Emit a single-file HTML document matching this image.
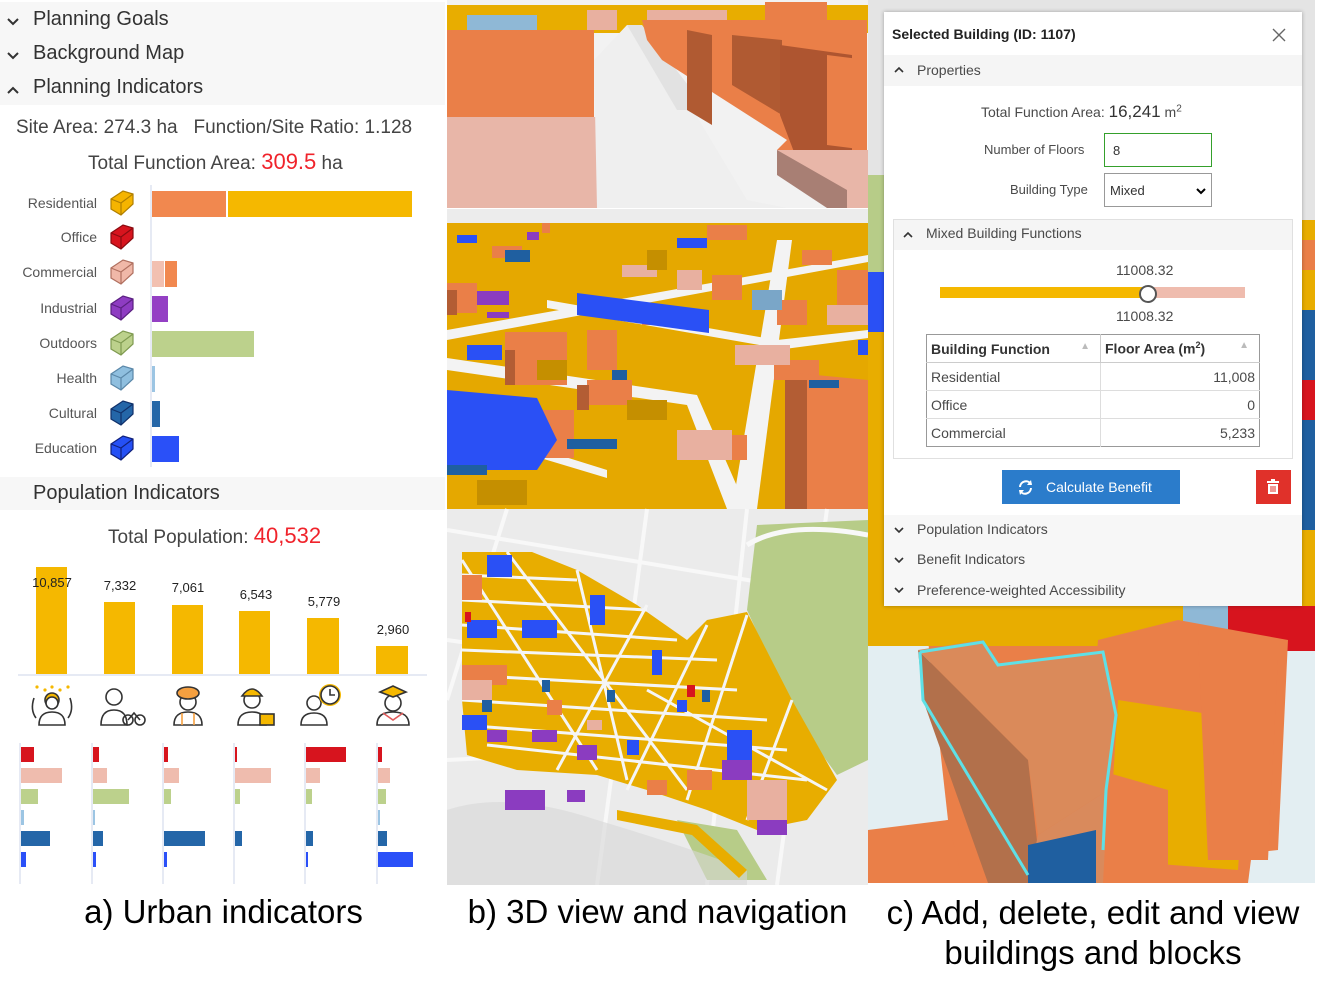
<!DOCTYPE html>
<html><head><meta charset="utf-8">
<style>
*{margin:0;padding:0;box-sizing:border-box}
body{width:1323px;height:993px;background:#fff;position:relative;overflow:hidden;font-family:"Liberation Sans",sans-serif;color:#323232}
.a{position:absolute}
.hdr{position:absolute;left:0;width:445px;background:#f7f7f7;font-size:20px;color:#323232}
.row{position:absolute;left:33px;white-space:nowrap}
.lbl{position:absolute;left:0;width:97px;font-size:14px;color:#555;text-align:right;white-space:nowrap}
.cap{position:absolute;font-size:33px;color:#000;white-space:nowrap;text-align:center}
.dlg{position:absolute;left:884px;top:12px;width:418px;height:594px;background:#fff;box-shadow:0 0 4px rgba(0,0,0,.3);font-size:14px;color:#4a4a4a}
table{border-collapse:collapse}
</style></head><body>

<!-- ===== Panel a ===== -->
<div class="hdr" style="top:2px;height:103px"></div>
<svg class="a" style="left:0;top:0" width="30" height="510">
 <g fill="none" stroke="#333" stroke-width="2">
  <path d="M8 19 L13 24 L18 19"/><path d="M8 53 L13 58 L18 53"/><path d="M8 93 L13 88 L18 93"/><path d="M8 499 L13 494 L18 499"/>
 </g>
</svg>
<div class="row" style="top:8px;font-size:20px">Planning Goals</div>
<div class="row" style="top:42px;font-size:20px">Background Map</div>
<div class="row" style="top:76px;font-size:20px">Planning Indicators</div>
<div class="a" style="left:16px;top:117px;font-size:19px;color:#444;white-space:nowrap">Site Area: 274.3 ha&nbsp;&nbsp;&nbsp;Function/Site Ratio: 1.128</div>
<div class="a" style="left:88px;top:149px;font-size:19px;color:#444;white-space:nowrap">Total Function Area: <span style="color:#f0232b;font-size:22px">309.5</span> ha</div>

<div class="lbl" style="top:195px">Residential</div>
<div class="lbl" style="top:229px">Office</div>
<div class="lbl" style="top:264px">Commercial</div>
<div class="lbl" style="top:300px">Industrial</div>
<div class="lbl" style="top:335px">Outdoors</div>
<div class="lbl" style="top:370px">Health</div>
<div class="lbl" style="top:405px">Cultural</div>
<div class="lbl" style="top:440px">Education</div>

<svg class="a" style="left:0;top:180px" width="445" height="290">
 <defs><g id="cube"><path d="M1 9 L13 1 L23 4 L23 14 L11 25 L1 19 Z"/><path d="M1 9 L11 13 L23 4 M11 13 L11 25" fill="none"/></g></defs>
 <g stroke-width="1.2">
  <use href="#cube" x="110" y="10" fill="#f5b400" stroke="#b07f00"/>
  <use href="#cube" x="110" y="44" fill="#d7141e" stroke="#8a0b10"/>
  <use href="#cube" x="110" y="79" fill="#f0b8a8" stroke="#b07060"/>
  <use href="#cube" x="110" y="115" fill="#8e3cc2" stroke="#5a2080"/>
  <use href="#cube" x="110" y="150" fill="#bcd18c" stroke="#7f9a50"/>
  <use href="#cube" x="110" y="185" fill="#8fbfdf" stroke="#5a87a8"/>
  <use href="#cube" x="110" y="220" fill="#2466a8" stroke="#10306a"/>
  <use href="#cube" x="110" y="255" fill="#2550f5" stroke="#10207a"/>
 </g>
 <line x1="151" y1="5" x2="151" y2="287" stroke="#dde3f0" stroke-width="1.5"/>
 <rect x="152" y="11" width="74" height="26" fill="#f1884f"/>
 <rect x="228" y="11" width="184" height="26" fill="#f5b800"/>
 <rect x="152" y="81" width="12" height="26" fill="#f2c0b1"/>
 <rect x="165" y="81" width="12" height="26" fill="#f1884f"/>
 <rect x="152" y="116" width="16" height="26" fill="#9440c4"/>
 <rect x="152" y="151" width="102" height="26" fill="#bcd18c"/>
 <rect x="152" y="186" width="3" height="26" fill="#9cc5e3"/>
 <rect x="152" y="221" width="8" height="26" fill="#2466a8"/>
 <rect x="152" y="256" width="27" height="26" fill="#2a50f8"/>
</svg>

<div class="hdr" style="top:477px;height:33px"></div>
<div class="row" style="top:482px;font-size:20px">Population Indicators</div>
<div class="a" style="left:108px;top:523px;font-size:19px;color:#444;white-space:nowrap">Total Population: <span style="color:#f0232b;font-size:22px">40,532</span></div>

<svg class="a" style="left:0;top:560px" width="445" height="330">
 <g fill="#f5b800">
  <rect x="36" y="7" width="31" height="107"/>
  <rect x="104" y="42" width="31" height="72"/>
  <rect x="172" y="45" width="31" height="69"/>
  <rect x="239" y="51" width="31" height="63"/>
  <rect x="307" y="58" width="32" height="56"/>
  <rect x="376" y="86" width="32" height="28"/>
 </g>
 <line x1="18" y1="115" x2="427" y2="115" stroke="#dde3f0" stroke-width="1.5"/>
 <g font-size="13" fill="#222" text-anchor="middle" font-family="Liberation Sans">
  <text x="52" y="27">10,857</text><text x="120" y="30">7,332</text><text x="188" y="32">7,061</text>
  <text x="256" y="39">6,543</text><text x="324" y="46">5,779</text><text x="393" y="74">2,960</text>
 </g>
 <g stroke="#333" stroke-width="1.6" fill="#fff">
  <g transform="translate(52,0)"><circle cx="0" cy="140" r="7" fill="#f5b800"/><path d="M-13 165 Q-13 152 0 152 Q13 152 13 165 Z"/><circle cx="0" cy="143" r="6"/><path d="M-18 138 Q-22 150 -16 158 M18 138 Q22 150 16 158" fill="none"/></g>
  <g fill="#f5b800" stroke="none"><circle cx="37" cy="127" r="1.6"/><circle cx="45" cy="130" r="1.6"/><circle cx="52" cy="127" r="1.6"/><circle cx="60" cy="130" r="1.6"/><circle cx="68" cy="127" r="1.6"/></g>
  <g transform="translate(114,0)"><circle cx="0" cy="137" r="8"/><path d="M-13 165 Q-13 150 0 150 Q13 150 13 165 Z"/><circle cx="14" cy="160" r="5" fill="none"/><circle cx="26" cy="160" r="5" fill="none"/><path d="M14 160 L20 153 L26 160" fill="none"/></g>
  <g transform="translate(188,0)"><circle cx="0" cy="142" r="8"/><ellipse cx="0" cy="133" rx="11" ry="6" fill="#f5a040"/><path d="M-14 165 Q-14 152 0 152 Q14 152 14 165 Z"/><path d="M-6 153 L-6 165 M6 153 L6 165" stroke="#f5a040"/></g>
  <g transform="translate(252,0)"><circle cx="0" cy="140" r="8"/><path d="M-10 136 Q0 122 10 136 Z" fill="#f5b800"/><path d="M-14 165 Q-14 152 0 152 Q14 152 14 165 Z"/><rect x="8" y="154" width="14" height="11" fill="#f5b800"/></g>
  <g transform="translate(318,0)"><circle cx="-4" cy="143" r="7"/><path d="M-17 165 Q-17 153 -4 153 Q9 153 9 165 Z"/><circle cx="12" cy="135" r="11" fill="#f5b800" stroke="none"/><circle cx="12" cy="135" r="9"/><path d="M12 129 L12 135 L17 135" fill="none"/></g>
  <g transform="translate(393,0)"><circle cx="0" cy="143" r="8"/><path d="M-13 132 L0 126 L13 132 L0 137 Z" fill="#f5b800"/><path d="M-16 165 Q-16 152 0 152 Q16 152 16 165 Z"/><path d="M-10 153 L0 160 L10 153" stroke="#e05a5a" fill="none"/></g>
 </g>
 <g>
  <g stroke="#dde3f0" stroke-width="1.5"><line x1="20" y1="183" x2="20" y2="324"/><line x1="92" y1="183" x2="92" y2="324"/><line x1="163" y1="183" x2="163" y2="324"/><line x1="234" y1="183" x2="234" y2="324"/><line x1="305" y1="183" x2="305" y2="324"/><line x1="377" y1="183" x2="377" y2="324"/></g>
  <g fill="#d7141e"><rect x="21" y="187" width="13" height="15"/><rect x="93" y="187" width="6" height="15"/><rect x="164" y="187" width="4" height="15"/><rect x="235" y="187" width="2" height="15"/><rect x="306" y="187" width="40" height="15"/><rect x="378" y="187" width="4" height="15"/></g>
  <g fill="#efbcae"><rect x="21" y="208" width="41" height="15"/><rect x="93" y="208" width="14" height="15"/><rect x="164" y="208" width="15" height="15"/><rect x="235" y="208" width="36" height="15"/><rect x="306" y="208" width="14" height="15"/><rect x="378" y="208" width="12" height="15"/></g>
  <g fill="#bcd18c"><rect x="21" y="229" width="17" height="15"/><rect x="93" y="229" width="36" height="15"/><rect x="164" y="229" width="7" height="15"/><rect x="235" y="229" width="5" height="15"/><rect x="306" y="229" width="6" height="15"/><rect x="378" y="229" width="8" height="15"/></g>
  <g fill="#9cc5e3"><rect x="21" y="250" width="3" height="15"/><rect x="93" y="250" width="2" height="15"/><rect x="378" y="250" width="2" height="15"/></g>
  <g fill="#2466a8"><rect x="21" y="271" width="29" height="15"/><rect x="93" y="271" width="10" height="15"/><rect x="164" y="271" width="41" height="15"/><rect x="235" y="271" width="7" height="15"/><rect x="306" y="271" width="7" height="15"/><rect x="378" y="271" width="9" height="15"/></g>
  <g fill="#2a50f8"><rect x="21" y="292" width="5" height="15"/><rect x="93" y="292" width="3" height="15"/><rect x="164" y="292" width="3" height="15"/><rect x="306" y="292" width="2" height="15"/><rect x="378" y="292" width="35" height="15"/></g>
 </g>
</svg>

<!-- ===== Panel b ===== -->
<svg class="a" style="left:447px;top:0" width="421" height="885">
 <rect x="0" y="0" width="421" height="208" fill="#f2f2f2"/>
 <rect x="0" y="5" width="421" height="28" fill="#e8ad00"/>
 <rect x="20" y="15" width="70" height="20" fill="#8fb8d6"/>
 <rect x="140" y="10" width="30" height="20" fill="#e8b0a0"/>
 <rect x="200" y="10" width="80" height="20" fill="#e8b0a0"/>
 <rect x="0" y="30" width="147" height="88" fill="#ea7f48"/>
 <rect x="0" y="117" width="150" height="91" fill="#e8b6a8"/>
 <polygon points="147,60 180,25 195,25 300,200 340,208 150,208" fill="#efefef"/>
 <polygon points="180,25 195,25 260,110 230,110" fill="#e2e2e2"/>
 <polygon points="195,20 420,20 420,150 330,150 340,140 215,60 200,40" fill="#ea7f48"/>
 <polygon points="318,2 380,2 380,35 318,35" fill="#ea7f48"/>
 <polygon points="240,30 265,35 265,125 240,110" fill="#b05a32"/>
 <polygon points="285,35 335,40 335,115 285,85" fill="#b05a32"/>
 <polygon points="333,45 405,55 405,170 350,160 333,115" fill="#ae5530"/>
 <polygon points="380,55 420,60 420,150 380,145" fill="#ea7f48"/>
 <polygon points="330,150 421,150 421,208 400,208 330,168" fill="#e8b6a8"/>
 <polygon points="330,150 400,190 400,208 380,208 330,175" fill="#a87f74"/>
 <rect x="0" y="209" width="421" height="300" fill="#e5a800"/>
 <rect x="0" y="209" width="421" height="14" fill="#ececec"/>
 <g fill="#f3f3f3">
  <polygon points="330,240 345,240 310,509 285,509"/>
  <polygon points="0,330 421,255 421,262 0,340"/>
  <polygon points="0,358 250,395 300,509 280,509 240,405 0,370"/>
  <polygon points="100,300 330,340 330,348 100,308"/>
  <polygon points="0,420 160,470 160,478 0,430"/>
  <polygon points="330,340 421,330 421,338 330,350"/>
 </g>
 <g fill="#ea7f48">
  <rect x="95" y="223" width="8" height="10"/><rect x="260" y="225" width="40" height="15"/>
  <rect x="0" y="283" width="30" height="30"/><rect x="45" y="246" width="30" height="12"/>
  <rect x="58" y="332" width="62" height="53"/><rect x="65" y="410" width="62" height="48"/>
  <rect x="140" y="330" width="30" height="40"/><rect x="195" y="305" width="20" height="20"/>
  <rect x="265" y="275" width="30" height="25"/><rect x="330" y="300" width="30" height="25"/>
  <rect x="327" y="360" width="45" height="20"/><rect x="140" y="380" width="45" height="25"/>
  <rect x="280" y="435" width="20" height="25"/>
  <rect x="355" y="250" width="30" height="15"/><rect x="390" y="270" width="31" height="40"/>
 </g>
 <g fill="#b35d34"><rect x="58" y="350" width="10" height="35"/><rect x="130" y="385" width="12" height="25"/><rect x="0" y="290" width="10" height="25"/></g>
 <polygon points="338,372 421,380 421,509 338,509" fill="#ea7f48"/>
 <polygon points="338,380 360,380 360,509 338,509" fill="#b35d34"/>
 <g fill="#2a50f5">
  <polygon points="130,293 262,310 262,333 130,315"/><polygon points="0,390 90,398 110,440 90,470 0,470"/>
  <rect x="10" y="235" width="20" height="8"/><rect x="230" y="238" width="30" height="10"/><rect x="411" y="340" width="10" height="15"/>
  <rect x="20" y="345" width="35" height="15"/>
 </g>
 <g fill="#1f5fa0"><rect x="58" y="250" width="25" height="12"/><rect x="120" y="439" width="50" height="10"/><rect x="165" y="370" width="15" height="10"/><rect x="0" y="465" width="40" height="10"/><rect x="362" y="380" width="30" height="8"/></g>
 <g fill="#e8b0a0"><rect x="175" y="265" width="35" height="12"/><rect x="230" y="270" width="25" height="20"/><rect x="288" y="345" width="55" height="20"/><rect x="230" y="430" width="55" height="30"/><rect x="380" y="305" width="41" height="20"/></g>
 <g fill="#8b3cc0"><rect x="30" y="291" width="32" height="14"/><rect x="40" y="312" width="22" height="6"/><rect x="80" y="232" width="12" height="8"/></g>
 <rect x="305" y="290" width="30" height="20" fill="#7aa6c8"/>
 <g fill="#c58f00"><rect x="90" y="360" width="30" height="20"/><rect x="180" y="400" width="40" height="20"/><rect x="30" y="480" width="50" height="25"/><rect x="200" y="250" width="20" height="20"/></g>
 <rect x="0" y="509" width="421" height="376" fill="#ebebeb"/>
 <g stroke="#f8f8f8" stroke-width="4" fill="none">
  <path d="M0 530 L421 600 M60 509 L0 700 M200 509 L150 885 M300 509 L260 885 M0 760 L421 740 M380 509 L330 885 M0 640 L421 700"/>
 </g>
 <polygon points="310,525 421,520 421,760 390,775 350,720 300,610" fill="#b7cc88"/>
 <path d="M300 545 Q340 520 421 535" stroke="#f8f8f8" stroke-width="5" fill="none"/>
 <polygon points="230,820 290,830 320,880 260,880" fill="#b7cc88"/>
 <path d="M0 810 Q60 790 150 820 Q250 850 300 870 L300 885 L0 885" fill="#d7d7d7" opacity=".6"/>
 <polygon points="15,552 85,552 130,570 190,605 240,640 260,620 300,612 345,700 390,780 360,820 310,830 260,810 200,790 150,775 70,770 20,755 15,700" fill="#e8ad00"/>
 <g stroke="#f5f5f5" stroke-width="3" fill="none">
  <path d="M15 575 L130 580 M15 600 L200 610 M15 625 L230 640 M15 650 L270 660 M15 675 L290 690 M15 700 L320 720 M15 725 L340 750 M40 745 L360 780 M15 560 L150 770 M60 552 L240 790 M130 570 L180 780 M200 605 L110 770 M260 625 L180 790 M300 615 L240 800 M345 700 L300 820 M200 690 L380 790"/>
 </g>
 <g fill="#2a50f5"><rect x="40" y="555" width="25" height="22"/><rect x="20" y="620" width="30" height="18"/><rect x="75" y="620" width="35" height="18"/><rect x="15" y="715" width="25" height="15"/><rect x="143" y="595" width="15" height="30"/><rect x="205" y="650" width="10" height="25"/><rect x="280" y="730" width="25" height="30"/><rect x="180" y="740" width="12" height="15"/><rect x="230" y="700" width="10" height="12"/></g>
 <g fill="#ea7f48"><rect x="15" y="575" width="20" height="25"/><rect x="15" y="665" width="45" height="20"/><rect x="240" y="770" width="25" height="20"/><rect x="200" y="780" width="20" height="15"/><rect x="100" y="700" width="15" height="15"/></g>
 <g fill="#e8b0a0"><rect x="15" y="680" width="30" height="20"/><rect x="300" y="780" width="40" height="40"/><rect x="140" y="720" width="15" height="10"/></g>
 <g fill="#1f5fa0"><rect x="95" y="680" width="8" height="12"/><rect x="160" y="690" width="8" height="12"/><rect x="255" y="690" width="8" height="12"/><rect x="35" y="700" width="10" height="12"/></g>
 <g fill="#8b3cc0"><rect x="58" y="790" width="40" height="20"/><rect x="120" y="790" width="18" height="12"/><rect x="130" y="745" width="20" height="15"/><rect x="85" y="730" width="25" height="12"/><rect x="275" y="760" width="30" height="20"/><rect x="310" y="820" width="30" height="15"/><rect x="40" y="730" width="20" height="12"/></g>
 <g fill="#d7141e"><rect x="18" y="612" width="6" height="10"/><rect x="240" y="685" width="8" height="12"/></g>
 <polygon points="170,810 250,825 300,870 292,878 245,835 170,820" fill="#e8ad00"/>
</svg>

<!-- ===== Panel c ===== -->
<svg class="a" style="left:868px;top:0" width="447" height="883">
 <rect x="0" y="0" width="447" height="883" fill="#e4e4e4"/>
 <rect x="0" y="175" width="20" height="97" fill="#b7cc88"/>
 <rect x="0" y="272" width="20" height="60" fill="#2a50f5"/>
 <rect x="0" y="332" width="20" height="280" fill="#e8ad00"/>
 <rect x="432" y="220" width="15" height="390" fill="#e8ad00"/>
 <rect x="432" y="240" width="15" height="30" fill="#ea7f48"/>
 <rect x="432" y="310" width="15" height="70" fill="#1f5fa0"/>
 <rect x="432" y="380" width="15" height="40" fill="#d7141e"/>
 <rect x="432" y="420" width="15" height="110" fill="#1f5fa0"/>
 <!-- 3D bottom -->
 <rect x="0" y="606" width="447" height="277" fill="#ea7f48"/>
 <polygon points="0,640 60,640 80,820 0,835" fill="#e3eef2"/>
 <polygon points="410,650 447,650 447,883 380,883" fill="#e3eef2"/>
 <rect x="0" y="606" width="447" height="40" fill="#e8ad00"/>
 <rect x="315" y="606" width="45" height="40" fill="#8fb8d6"/>
 <rect x="360" y="606" width="87" height="45" fill="#d7141e"/>
 <polygon points="230,640 310,620 420,640 410,850 320,860 220,760" fill="#ea7f48"/>
 <polygon points="250,700 380,720 370,870 240,860" fill="#e8ad00"/>
 <polygon points="330,640 410,660 400,860 340,860" fill="#ea7f48"/>
 <polygon points="230,770 300,790 300,883 230,883" fill="#ea7f48"/>
 <polygon points="0,830 80,820 95,883 0,883" fill="#ea7f48"/>
 <polygon points="50,650 115,640 130,665 235,652 250,715 240,790 170,835 160,760" fill="#da8a5a"/>
 <polygon points="50,650 160,760 170,850 160,883 120,883 55,700" fill="#b2704b"/>
 <polygon points="170,835 240,790 235,883 160,883" fill="#d98a5c"/>
 <polygon points="160,845 228,830 228,883 160,883" fill="#1f5fa0"/>
 <path d="M52 652 L115 642 L130 665 L235 652 L248 715 L238 790 L235 850" stroke="#5ee0e6" stroke-width="3" fill="none"/>
 <path d="M52 652 L55 700 L160 875" stroke="#5ee0e6" stroke-width="3" fill="none"/>
</svg>

<div class="dlg">
 <div class="a" style="left:8px;top:14px;font-size:14px;font-weight:bold;color:#222">Selected Building (ID: 1107)</div>
 <svg class="a" style="left:388px;top:16px" width="14" height="14"><path d="M1 1 L13 13 M13 1 L1 13" stroke="#666" stroke-width="1.4"/></svg>
 <div class="a" style="left:0;top:43px;width:418px;height:31px;background:#f5f5f5"></div>
 <svg class="a" style="left:10px;top:54px" width="10" height="8"><path d="M1 6 L5 2 L9 6" stroke="#333" stroke-width="1.6" fill="none"/></svg>
 <div class="a" style="left:33px;top:50px">Properties</div>
 <div class="a" style="left:97px;top:90px;white-space:nowrap">Total Function Area: <span style="font-size:17px;color:#333">16,241</span> m<sup style="font-size:10px">2</sup></div>
 <div class="a" style="left:100px;top:130px;font-size:13px">Number of Floors</div>
 <div class="a" style="left:220px;top:121px;width:108px;height:34px;border:1.5px solid #35a02c;font-size:13px;padding:9px 8px;color:#333">8</div>
 <div class="a" style="left:126px;top:170px;font-size:13px">Building Type</div>
 <div class="a" style="left:220px;top:161px;width:108px;height:34px;border:1px solid #999;font-size:13px;padding:9px 5px;color:#333">Mixed</div>
 <svg class="a" style="left:312px;top:175px" width="10" height="8"><path d="M1 2 L5 6 L9 2" stroke="#000" stroke-width="2" fill="none"/></svg>
 <div class="a" style="left:9px;top:207px;width:400px;height:240px;border:1px solid #e0e0e0"></div>
 <div class="a" style="left:10px;top:208px;width:398px;height:30px;background:#f5f5f5"></div>
 <svg class="a" style="left:19px;top:219px" width="10" height="8"><path d="M1 6 L5 2 L9 6" stroke="#333" stroke-width="1.6" fill="none"/></svg>
 <div class="a" style="left:42px;top:213px">Mixed Building Functions</div>
 <div class="a" style="left:232px;top:250px">11008.32</div>
 <div class="a" style="left:56px;top:275px;width:208px;height:11px;background:#f5b800"></div>
 <div class="a" style="left:264px;top:275px;width:97px;height:11px;background:#efbcae"></div>
 <div class="a" style="left:255px;top:273px;width:18px;height:18px;border:2px solid #555;border-radius:50%;background:#fff"></div>
 <div class="a" style="left:232px;top:296px">11008.32</div>
 <table class="a" style="left:42px;top:322px;width:334px;border:1.5px solid #999;font-size:14px">
  <tr style="height:28px;border-bottom:1px solid #ccc"><td style="width:174px;padding-left:4px;font-weight:bold;color:#333;border-right:1px solid #ccc">Building Function <span style="float:right;color:#bbb;font-size:10px;padding-right:10px">&#9650;</span></td><td style="padding-left:4px;font-weight:bold;color:#333">Floor Area (m<sup style="font-size:9px">2</sup>)<span style="float:right;color:#bbb;font-size:10px;padding-right:10px">&#9650;</span></td></tr>
  <tr style="height:28px;border-bottom:1px solid #ddd"><td style="padding-left:4px;border-right:1px solid #ddd">Residential</td><td style="text-align:right;padding-right:4px">11,008</td></tr>
  <tr style="height:28px;border-bottom:1px solid #ddd"><td style="padding-left:4px;border-right:1px solid #ddd">Office</td><td style="text-align:right;padding-right:4px">0</td></tr>
  <tr style="height:28px"><td style="padding-left:4px;border-right:1px solid #ddd">Commercial</td><td style="text-align:right;padding-right:4px">5,233</td></tr>
 </table>
 <div class="a" style="left:118px;top:458px;width:178px;height:34px;background:#2b7ccb;color:#fff;padding:9px 0 0 44px">Calculate Benefit</div>
 <svg class="a" style="left:133px;top:467px" width="17" height="17"><path d="M3 8 A6 6 0 0 1 14 5 M14 9 A6 6 0 0 1 3 12" stroke="#fff" stroke-width="2" fill="none"/><path d="M14 1 L15 6 L10 6 Z M3 16 L2 11 L7 11 Z" fill="#fff"/></svg>
 <div class="a" style="left:372px;top:458px;width:35px;height:34px;background:#e0312a"></div>
 <svg class="a" style="left:382px;top:467px" width="14" height="16"><rect x="1" y="2" width="12" height="2" fill="#fff"/><rect x="5" y="0" width="4" height="2" fill="#fff"/><rect x="2" y="5" width="10" height="10" fill="#fff"/><path d="M5 7 V13 M7 7 V13 M9 7 V13" stroke="#e0312a"/></svg>
 <div class="a" style="left:0;top:503px;width:418px;height:91px;background:#f7f7f7"></div>
 <svg class="a" style="left:10px;top:514px" width="10" height="70"><g stroke="#333" stroke-width="1.6" fill="none"><path d="M1 2 L5 6 L9 2"/><path d="M1 32 L5 36 L9 32"/><path d="M1 62 L5 66 L9 62"/></g></svg>
 <div class="a" style="left:33px;top:509px">Population Indicators</div>
 <div class="a" style="left:33px;top:539px">Benefit Indicators</div>
 <div class="a" style="left:33px;top:570px">Preference-weighted Accessibility</div>
</div>

<div class="cap" style="left:0;width:447px;top:893px">a) Urban indicators</div>
<div class="cap" style="left:447px;width:421px;top:893px">b) 3D view and navigation</div>
<div class="cap" style="left:868px;width:450px;top:893px;line-height:40px">c) Add, delete, edit and view<br>buildings and blocks</div>
</body></html>
